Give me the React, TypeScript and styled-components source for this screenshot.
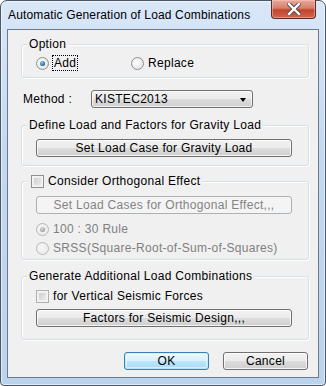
import styled, { createGlobalStyle, css } from "styled-components";

const GlobalStyle = createGlobalStyle`
  body {
    margin: 0;
    background: #ffffff;
    font-family: "Liberation Sans", Arial, sans-serif;
    font-size: 12px;
    color: #000000;
  }
`;

const Window = styled.div`
  box-sizing: border-box;
  width: 326px;
  height: 386px;
  border: 1px solid #4b5767;
  border-radius: 7px 7px 4px 4px;
  background: linear-gradient(#d9e7f8, #c3d8f1 40%, #bcd3ee);
  box-shadow: inset 0 0 0 1px rgba(255, 255, 255, 0.55);
  padding: 0 6px 7px 6px;
  display: flex;
  flex-direction: column;
`;

const TitleBar = styled.div`
  height: 28px;
  display: flex;
  align-items: center;
  flex-shrink: 0;
`;

const Title = styled.span`
  padding-left: 1px;
  line-height: 14px;
  letter-spacing: 0.15px;
`;

const CloseButton = styled.div`
  box-sizing: border-box;
  margin-left: auto;
  margin-right: 3px;
  align-self: flex-start;
  margin-top: -1px;
  width: 45px;
  height: 19px;
  border: 1px solid #5a2a24;
  border-top: none;
  border-radius: 0 0 4px 4px;
  background: linear-gradient(#e9a99b, #d7806c 45%, #c2442b 55%, #d3654b);
  box-shadow: inset 0 0 0 1px rgba(255, 210, 200, 0.45);
  display: flex;
  align-items: center;
  justify-content: center;
`;

const Client = styled.div`
  flex: 1;
  border: 1px solid #6b7a8c;
  background: #f0f0f0;
  padding: 0 9px 0 13px;
  display: flex;
  flex-direction: column;
  letter-spacing: 0.3px;
`;

const Group = styled.div<{ $height: number; $top: number }>`
  box-sizing: border-box;
  position: relative;
  height: ${(p) => p.$height}px;
  margin-top: ${(p) => p.$top}px;
  border: 1px solid #d5dfe5;
  border-radius: 3px;
  box-shadow: inset 1px 1px 0 #ffffff, 1px 1px 0 #ffffff;
  display: flex;
  flex-direction: column;
  padding-left: 14px;
`;

const Legend = styled.div`
  position: absolute;
  top: -8px;
  left: 5px;
  padding: 0 2px;
  background: #f0f0f0;
  line-height: 14px;
  display: flex;
  align-items: center;
  gap: 4px;
`;

const OptionRow = styled.div`
  display: flex;
  align-items: center;
  margin-top: 11px;
  height: 14px;
`;

const Choice = styled.label<{ $width?: number; $disabled?: boolean }>`
  display: flex;
  align-items: center;
  gap: 4px;
  height: 16px;
  line-height: 14px;
  width: ${(p) => (p.$width ? `${p.$width}px` : "auto")};
  color: ${(p) => (p.$disabled ? "#808080" : "#000000")};
`;

const FocusText = styled.span`
  outline: 1px dotted #000000;
  outline-offset: 0;
  padding: 0 1px;
`;

const Radio = styled.span<{ $checked?: boolean; $disabled?: boolean }>`
  box-sizing: border-box;
  position: relative;
  width: 13px;
  height: 13px;
  border-radius: 50%;
  border: 1px solid ${(p) => (p.$disabled ? "#b8b8b8" : "#8e8f8f")};
  background: ${(p) =>
    p.$disabled
      ? "radial-gradient(circle at 40% 40%, #f7f7f7, #e6e6e6)"
      : "radial-gradient(circle at 40% 40%, #ffffff, #dcdcdc)"};
  flex-shrink: 0;
  ${(p) =>
    p.$checked &&
    css`
      &::after {
        content: "";
        position: absolute;
        left: 3px;
        top: 3px;
        width: 5px;
        height: 5px;
        border-radius: 50%;
        background: ${p.$disabled
          ? "radial-gradient(circle at 40% 35%, #d8d8d8, #8c8c8c)"
          : "radial-gradient(circle at 40% 35%, #7fd1f7, #1d5f96 70%, #123e6a)"};
      }
    `}
`;

const Check = styled.span<{ $disabled?: boolean }>`
  box-sizing: border-box;
  width: 13px;
  height: 13px;
  border: 1px solid ${(p) => (p.$disabled ? "#b0b0b0" : "#8e8f8f")};
  box-shadow: inset 0 0 0 1px #f4f4f4;
  background-image: linear-gradient(135deg, #c8c8c8, #f2f2f2);
  background-clip: content-box;
  padding: 2px;
  flex-shrink: 0;
`;

const MethodRow = styled.div`
  display: flex;
  align-items: center;
  margin-top: 12px;
  height: 18px;
`;

const FieldLabel = styled.span`
  width: 68px;
  padding-left: 2px;
`;

const Combo = styled.div`
  box-sizing: border-box;
  width: 162px;
  height: 18px;
  border: 1px solid #707070;
  border-radius: 3px;
  background: linear-gradient(#f2f2f2, #ebebeb 50%, #dddddd 51%, #cfcfcf);
  box-shadow: inset 0 0 0 1px rgba(255, 255, 255, 0.7);
  display: flex;
  align-items: center;
  padding: 0 6px 0 3px;
  line-height: 14px;
`;

const Arrow = styled.span`
  margin-left: auto;
  width: 0;
  height: 0;
  border-left: 3.5px solid transparent;
  border-right: 3.5px solid transparent;
  border-top: 4px solid #000000;
  margin-top: 2px;
`;

const PushButton = styled.div<{ $disabled?: boolean; $default?: boolean; $width?: number; $top?: number }>`
  box-sizing: border-box;
  width: ${(p) => p.$width ?? 256}px;
  height: 18px;
  margin-top: ${(p) => p.$top ?? 0}px;
  border-radius: 3px;
  display: flex;
  align-items: center;
  justify-content: center;
  line-height: 14px;
  flex-shrink: 0;
  ${(p) =>
    p.$disabled
      ? css`
          border: 1px solid #adb2b5;
          background: #f4f4f4;
          color: #838383;
        `
      : p.$default
      ? css`
          border: 1px solid #3c7fb1;
          background: linear-gradient(#eaf6fd, #d9f0fc 50%, #bee6fd 51%, #a7d9f5);
          box-shadow: inset 0 0 0 1px #48d8fb40, inset 0 0 0 2px rgba(255, 255, 255, 0.5);
        `
      : css`
          border: 1px solid #707070;
          background: linear-gradient(#f2f2f2, #ebebeb 50%, #dddddd 51%, #cfcfcf);
          box-shadow: inset 0 0 0 1px rgba(255, 255, 255, 0.75);
        `}
`;

const ButtonRow = styled.div`
  display: flex;
  justify-content: flex-end;
  gap: 14px;
  margin-top: 12px;
  padding-right: 1px;
`;

export default function App() {
  return (
    <>
      <GlobalStyle />
      <Window>
        <TitleBar>
          <Title>Automatic Generation of Load Combinations</Title>
          <CloseButton>
            <svg width="14" height="12" viewBox="0 0 14 12">
              <path d="M2 1 L12 11 M12 1 L2 11" stroke="#4a4a4a" strokeWidth="4.2" strokeLinecap="square" />
              <path d="M2 1 L12 11 M12 1 L2 11" stroke="#ffffff" strokeWidth="2.4" strokeLinecap="square" />
            </svg>
          </CloseButton>
        </TitleBar>
        <Client>
          <Group $top={14} $height={34}>
            <Legend>Option</Legend>
            <OptionRow>
              <Choice $width={95}>
                <Radio $checked />
                <FocusText>Add</FocusText>
              </Choice>
              <Choice>
                <Radio />
                Replace
              </Choice>
            </OptionRow>
          </Group>

          <MethodRow>
            <FieldLabel>Method :</FieldLabel>
            <Combo>
              KISTEC2013
              <Arrow />
            </Combo>
          </MethodRow>

          <Group $top={17} $height={41}>
            <Legend>Define Load and Factors for Gravity Load</Legend>
            <PushButton $top={13}>Set Load Case for Gravity Load</PushButton>
          </Group>

          <Group $top={15} $height={79}>
            <Legend>
              <Check style={{ marginLeft: 2 }} />
              Consider Orthogonal Effect
            </Legend>
            <PushButton $top={14} $disabled>
              Set Load Cases for Orthogonal Effect,,,
            </PushButton>
            <Choice $disabled style={{ marginTop: 7 }}>
              <Radio $checked $disabled />
              100 : 30 Rule
            </Choice>
            <Choice $disabled style={{ marginTop: 3 }}>
              <Radio $disabled />
              SRSS(Square-Root-of-Sum-of-Squares)
            </Choice>
          </Group>

          <Group $top={16} $height={64}>
            <Legend>Generate Additional Load Combinations</Legend>
            <Choice style={{ marginTop: 11 }}>
              <Check $disabled />
              for Vertical Seismic Forces
            </Choice>
            <PushButton $top={5}>Factors for Seismic Design,,,</PushButton>
          </Group>

          <ButtonRow>
            <PushButton $default $width={85}>
              OK
            </PushButton>
            <PushButton $width={85}>Cancel</PushButton>
          </ButtonRow>
        </Client>
      </Window>
    </>
  );
}
